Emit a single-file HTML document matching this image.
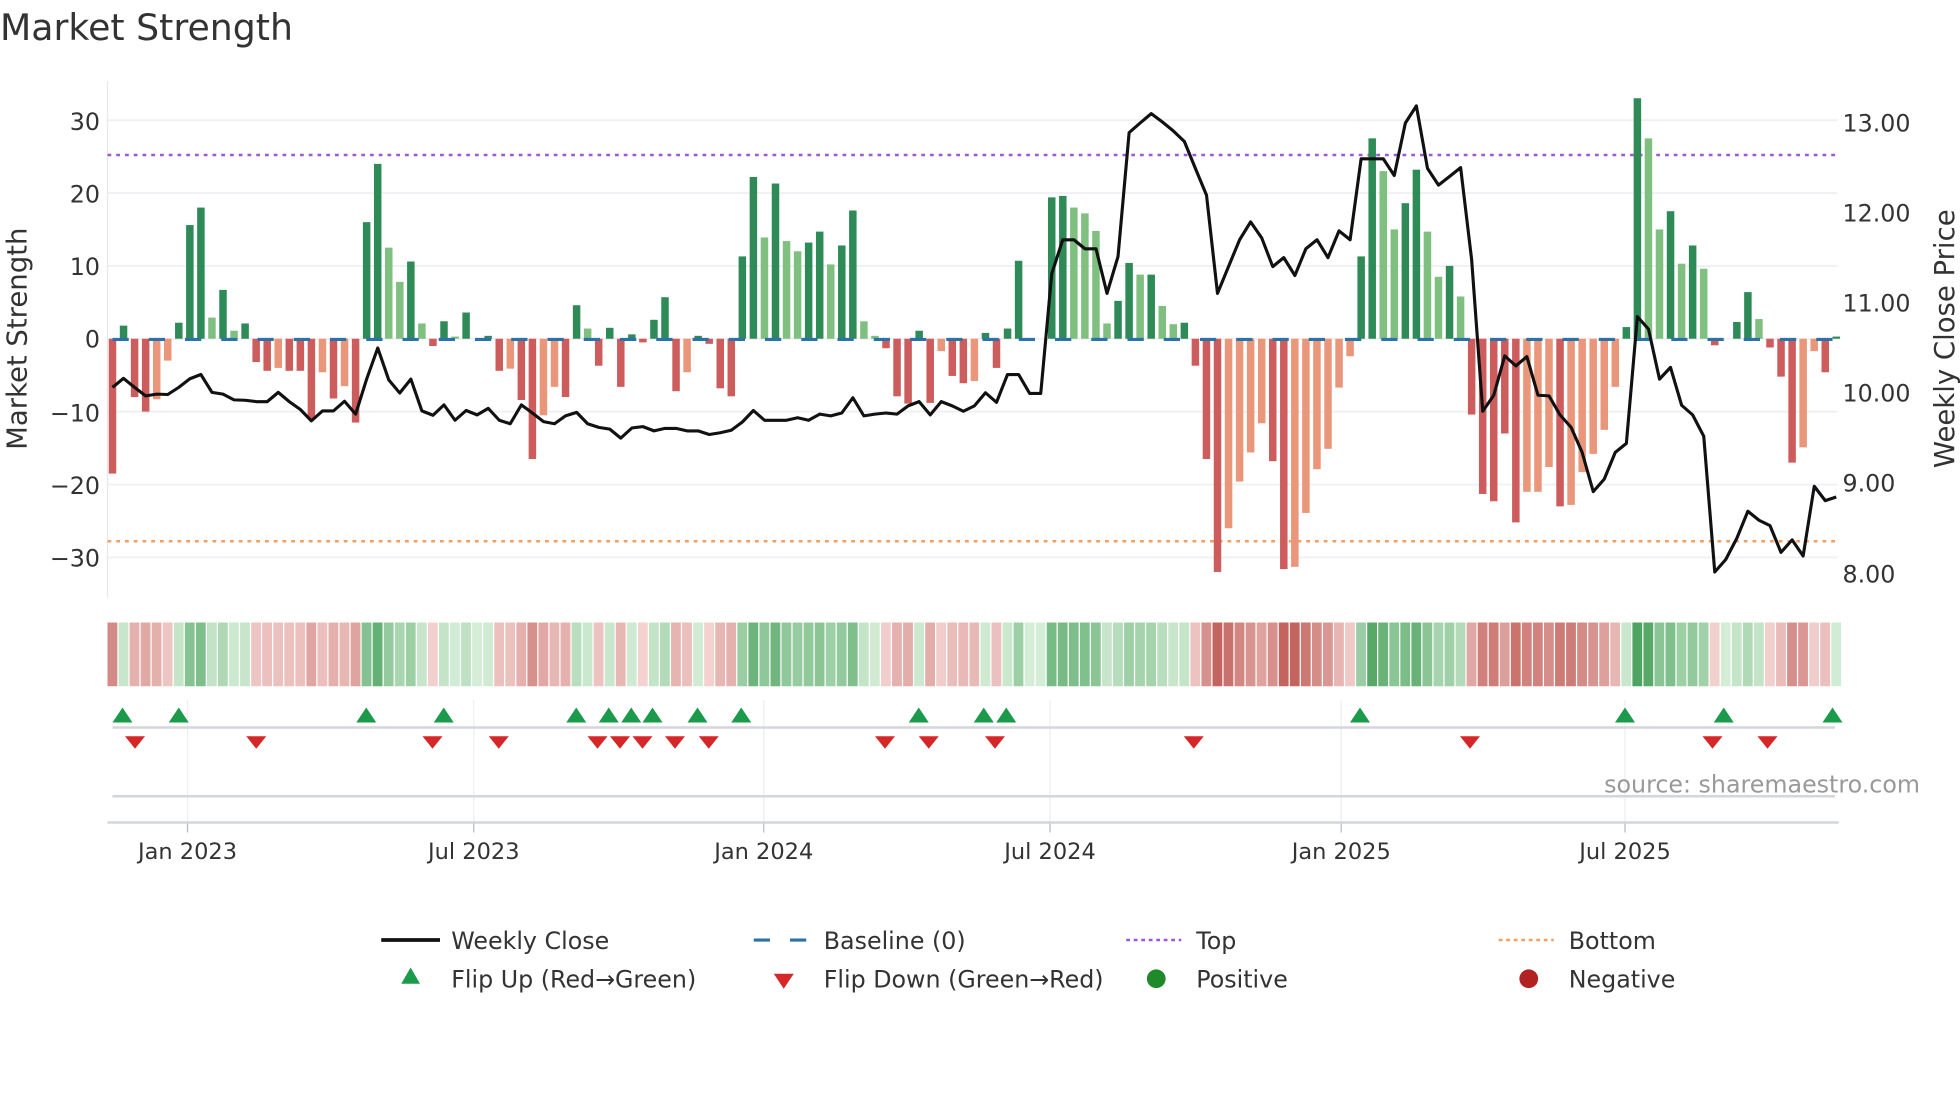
<!DOCTYPE html>
<html><head><meta charset="utf-8"><style>
html,body{margin:0;padding:0;background:#fff;}
svg{display:block;font-family:"DejaVu Sans","Liberation Sans",sans-serif;}
</style></head><body>
<svg id="s" width="1960" height="1102" viewBox="0 0 1568 881.6" xmlns="http://www.w3.org/2000/svg">
<rect width="1568" height="882" fill="#fff"/>
<text x="0" y="32" font-size="29" fill="#333">Market Strength</text>
<g id="grid"></g>
<line x1="86" y1="65" x2="86" y2="478" stroke="#e6e8ec" stroke-width="1"/>
<line x1="86" y1="124" x2="1470" y2="124" stroke="#9b59d6" stroke-width="2" stroke-dasharray="3 4"/>
<line x1="86" y1="433" x2="1470" y2="433" stroke="#f0a060" stroke-width="2" stroke-dasharray="3 4"/>
<g id="bars"></g>
<line x1="90" y1="271.5" x2="1471" y2="271.5" stroke="#2a72a8" stroke-width="2.5" stroke-dasharray="13 16"/>
<polyline id="price" fill="none" stroke="#111" stroke-width="2.5" stroke-linejoin="round"/>
<g font-size="19" fill="#333">
<g text-anchor="end">
<text x="80" y="104">30</text><text x="80" y="162">20</text><text x="80" y="220">10</text><text x="80" y="278">0</text>
<text x="80" y="337">−10</text><text x="80" y="395">−20</text><text x="80" y="453">−30</text>
</g>
<text x="1474" y="105">13.00</text><text x="1474" y="177">12.00</text><text x="1474" y="249">11.00</text>
<text x="1474" y="321">10.00</text><text x="1474" y="393">9.00</text><text x="1474" y="466">8.00</text>
</g>
<text transform="translate(21,271) rotate(-90)" font-size="22" fill="#333" text-anchor="middle">Market Strength</text>
<text transform="translate(1563,271) rotate(-90)" font-size="22" fill="#333" text-anchor="middle">Weekly Close Price</text>
<g id="heat"></g>
<g id="vgrid"></g>
<line x1="90" y1="582" x2="1468" y2="582" stroke="#d3d6da" stroke-width="2"/>
<line x1="90" y1="637" x2="1468" y2="637" stroke="#d3d6da" stroke-width="2"/>
<line x1="86" y1="658" x2="1471" y2="658" stroke="#d3d6da" stroke-width="2"/>
<g id="marks"></g>
<text x="1536" y="634" font-size="19" fill="#999" text-anchor="end">source: sharemaestro.com</text>
<g font-size="18" fill="#333" text-anchor="middle">
<text x="150" y="687">Jan 2023</text><text x="379" y="687">Jul 2023</text><text x="611" y="687">Jan 2024</text>
<text x="840" y="687">Jul 2024</text><text x="1073" y="687">Jan 2025</text><text x="1300" y="687">Jul 2025</text>
</g>
<g font-size="19" fill="#333">
<line x1="305" y1="752" x2="352" y2="752" stroke="#111" stroke-width="3"/>
<text x="361" y="759">Weekly Close</text>
<line x1="603" y1="752" x2="647" y2="752" stroke="#2a72a8" stroke-width="2.5" stroke-dasharray="13 16"/>
<text x="659" y="759">Baseline (0)</text>
<line x1="901" y1="752" x2="945" y2="752" stroke="#9b59d6" stroke-width="2" stroke-dasharray="3 3"/>
<text x="957" y="759">Top</text>
<line x1="1199" y1="752" x2="1243" y2="752" stroke="#f0a060" stroke-width="2" stroke-dasharray="3 3"/>
<text x="1255" y="759">Bottom</text>
<polygon points="321,787 336,787 328.5,774" fill="#1a9a4a"/>
<text x="361" y="790">Flip Up (Red→Green)</text>
<polygon points="619,779 635,779 627,791" fill="#d62728"/>
<text x="659" y="790">Flip Down (Green→Red)</text>
<circle cx="925" cy="783" r="7.5" fill="#1f8a2a"/>
<text x="957" y="790">Positive</text>
<circle cx="1223" cy="783" r="7.5" fill="#b22222"/>
<text x="1255" y="790">Negative</text>
</g>
</svg>
<script>
var NS="http://www.w3.org/2000/svg";
var P=8.84;
function el(p,t,a){var e=document.createElementNS(NS,t);for(var k in a)e.setAttribute(k,a[k]);document.getElementById(p).appendChild(e);return e;}
[30,20,10,0,-10,-20,-30].forEach(function(v){var y=271-5.83*v;el("grid","line",{x1:86,x2:1470,y1:y,y2:y,stroke:"#eef0f4","stroke-width":1.5});});
var B="-18.5r,1.8g,-8r,-10r,-8.3o,-3o,2.2g,15.6g,18g,2.9l,6.7g,1.1l,2.1g,-3.2r,-4.4r,-4o,-4.4r,-4.4r,-11r,-4.6o,-8.2r,-6.5o,-11.5r,16g,24g,12.5l,7.8l,10.6g,2.1l,-1r,2.4g,0.3l,3.6g,0g,0.4g,-4.4r,-4.1o,-8.4r,-16.5r,-10.5o,-6.6o,-8r,4.6g,1.4l,-3.7r,1.5g,-6.6r,0.6g,-0.5r,2.6g,5.7g,-7.2r,-4.6o,0.4g,-0.7r,-6.8r,-7.9r,11.3g,22.2g,13.9l,21.3g,13.4l,12l,13.2g,14.7g,10.2l,12.8g,17.6g,2.4l,0.4l,-1.3r,-7.9r,-8.9r,1.1g,-8.8r,-1.7o,-5.1r,-6.1r,-5.8o,0.8g,-4r,1.4g,10.7g,0g,0g,19.4g,19.6g,18l,17.2l,14.8l,2.1l,5.2g,10.4g,8.8l,8.8g,4.5l,2l,2.2g,-3.7r,-16.5r,-32r,-26o,-19.6o,-15.6o,-11.6o,-16.8r,-31.6r,-31.3o,-23.9o,-17.9o,-15.1o,-6.7o,-2.4o,11.3g,27.5g,23l,15l,18.6g,23.2g,14.7l,8.5l,10g,5.8l,-10.4r,-21.3r,-22.3r,-13r,-25.2r,-21o,-21o,-17.6o,-23r,-22.8o,-18.3o,-15.8o,-12.5o,-6.6o,1.6g,33g,27.5l,15l,17.5g,10.3l,12.8g,9.6l,-0.9r,0g,2.3g,6.4g,2.7l,-1.2r,-5.2r,-17r,-14.9o,-1.7o,-4.6r,0.3g".split(",");
var C={g:"#2e8b57",l:"#7fbf7f",r:"#cd5c5c",o:"#e9967a"};
function mix(a,b,t){var r=[];for(var i=0;i<3;i++){r.push(Math.round(a[i]+(b[i]-a[i])*t));}return "rgb("+r.join(",")+")";}
B.forEach(function(s,i){var v=parseFloat(s),c=s.slice(-1),cx=90+P*i;
 if(v!==0){var y0=271,y1=271-5.83*v;el("bars","rect",{x:cx-3,y:Math.min(y0,y1),width:6,height:Math.abs(y1-y0),fill:C[c]});}
 var t=Math.pow(Math.min(1,Math.abs(v)/30),0.85),col;
 if(v>=0)col=mix([212,237,214],[78,164,96],t);else col=mix([244,214,212],[196,100,94],t);
 el("heat","rect",{x:86+P*i,y:498,width:P-1,height:51,fill:col});
});
var L=[918,893,918,942,937,938,918,894,882,932,937,953,954,958,958,932,958,980,1012,984,984,957,993,895,808,897,934,895,984,996,967,1010,983,995,977,1010,1020,967,990,1014,1020,998,988,1020,1030,1035,1060,1032,1028,1040,1033,1033,1040,1040,1050,1045,1038,1015,983,1010,1010,1010,1003,1010,993,998,990,947,998,993,990,993,970,958,995,958,970,985,970,933,960,882,882,935,935,600,505,505,530,530,655,552,205,178,152,175,200,230,305,380,655,580,505,455,500,580,555,605,530,505,555,480,505,278,278,278,325,178,130,305,352,328,303,560,985,940,830,858,832,940,942,995,1030,1100,1210,1175,1100,1075,720,755,895,862,968,995,1055,1435,1400,1340,1265,1290,1305,1380,1345,1390,1195,1235,1225];
document.getElementById("price").setAttribute("points",L.map(function(o,i){return (90+P*i).toFixed(1)+","+(271+(o-782)*0.2858).toFixed(1);}).join(" "));
[150,379,611,840,1073,1300].forEach(function(x){el("vgrid","line",{x1:x,x2:x,y1:560,y2:658,stroke:"#eceef1","stroke-width":1});el("vgrid","line",{x1:x,x2:x,y1:658,y2:666,stroke:"#bbb","stroke-width":1});});
[98,143,293,355,461,487,505,522,558,593,735,787,805,1088,1300,1379,1466].forEach(function(x){el("marks","polygon",{points:(x-8)+",578 "+(x+8)+",578 "+x+",566",fill:"#1a9a4a"});});
[108,205,346,399,478,496,514,540,567,708,743,796,955,1176,1370,1414].forEach(function(x){el("marks","polygon",{points:(x-8)+",589 "+(x+8)+",589 "+x+",599",fill:"#d62728"});});
</script>
</body></html>
